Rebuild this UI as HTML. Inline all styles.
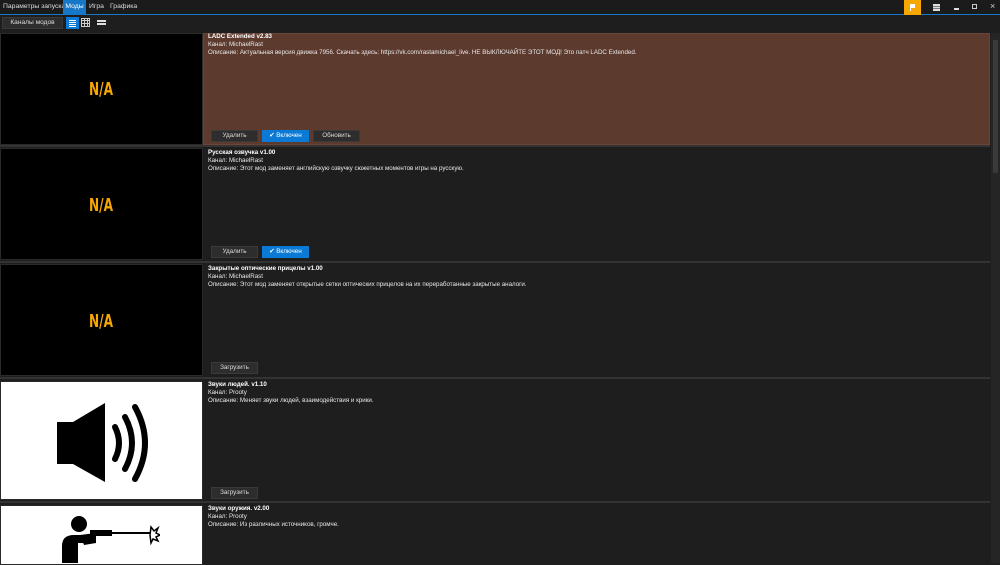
<!DOCTYPE html>
<html><head><meta charset="utf-8"><style>
*{margin:0;padding:0;box-sizing:border-box}
body{width:1000px;height:563px;overflow:hidden;background:#1e1e1e;font-family:"Liberation Sans",sans-serif;color:#ddd;position:relative;font-size:7px}
.a{position:absolute}
.tb{top:0;left:0;width:1000px;height:15px;background:#1b1b1b;border-bottom:1px solid #1677c7}
.tab{top:0;height:14px;line-height:14px;font-size:6.8px;color:#ddd}
.img{left:0;width:203px;background:#000;border:1px solid #2a2a2a}
.na{color:#f6a800;font-weight:bold;font-size:18px;font-family:"DejaVu Sans Condensed","Liberation Sans",sans-serif;transform:scaleX(0.75);transform-origin:left top;letter-spacing:0px}
.t{left:208px;top:0;font-size:6.2px;line-height:8px;color:#e8e8e8}
.t b{color:#fff}
.btn{height:12px;width:47px;background:#2d2d2d;border:1px solid #3a3a3a;color:#ddd;font-size:6.3px;text-align:center;line-height:10px}
.on{background:#0a7ad6;border-color:#0a7ad6;color:#fff}
.sep{left:0;width:990px;height:2px;background:#333}
</style></head><body>
<div class="a tb"></div>
<div class="a tab" style="left:3px">Параметры запуска</div>
<div class="a tab" style="left:63px;width:23px;background:#1677c7;text-align:center;color:#fff">Моды</div>
<div class="a tab" style="left:89px">Игра</div>
<div class="a tab" style="left:110px">Графика</div>
<div class="a" style="left:904px;top:0;width:17px;height:15px;background:#f6a800"><div class="a" style="left:6px;top:4px;width:5px;height:4px;background:#fff"></div><div class="a" style="left:6px;top:4px;width:1px;height:7px;background:#fff"></div></div>
<div class="a" style="left:933px;top:4px;width:7px;height:1.5px;background:#ddd;box-shadow:0 2.5px #ddd,0 5px #ddd"></div>
<div class="a" style="left:954px;top:8px;width:5px;height:1.5px;background:#ddd"></div>
<div class="a" style="left:972px;top:4px;width:5px;height:5px;border:1px solid #ccc"></div>
<div class="a" style="left:990px;top:1px;font-size:9px;color:#ccc">×</div>
<div class="a btn" style="left:2px;top:17px;width:61px;height:12px;font-size:6.6px">Каналы модов</div>
<div class="a" style="left:66px;top:17px;width:13px;height:12px;background:#0a7ad6"><div class="a" style="left:3px;top:3px;width:7px;height:1px;background:#fff;box-shadow:0 2px #fff,0 4px #fff,0 6px #fff"></div></div>
<div class="a" style="left:81px;top:18px;width:9px;height:9px;border:1px solid #ccc;background:repeating-linear-gradient(90deg,transparent 0 2px,#ccc 2px 3px),repeating-linear-gradient(0deg,transparent 0 2px,#ccc 2px 3px)"></div>
<div class="a" style="left:97px;top:20px;width:9px;height:1.5px;background:#ddd;box-shadow:0 3px #ddd"></div>
<div class="a" style="left:991px;top:33px;width:9px;height:530px;background:#252525"></div>
<div class="a" style="left:993px;top:40px;width:5px;height:133px;background:#3a3a3a"></div>
<!-- item1 -->
<div class="a" style="left:203px;top:33px;width:787px;height:112px;background:#5d3a2e;border:1px solid #6a4538"></div>
<div class="a img" style="top:33px;height:112px"></div>
<div class="a na" style="left:89px;top:79px">N/A</div>
<div class="a t" style="top:33px"><b>LADC Extended v2.83</b><br>Канал: MichaelRast<br>Описание: Актуальная версия движка 7956. Скачать здесь: https://vk.com/rastamichael_live. НЕ ВЫКЛЮЧАЙТЕ ЭТОТ МОД! Это патч LADC Extended.</div>
<div class="a btn" style="left:211px;top:130px">Удалить</div>
<div class="a btn on" style="left:262px;top:130px">✔ Включен</div>
<div class="a btn" style="left:313px;top:130px">Обновить</div>
<div class="a sep" style="top:145px"></div>
<!-- item2 -->
<div class="a img" style="top:148px;height:112px"></div>
<div class="a na" style="left:89px;top:195px">N/A</div>
<div class="a t" style="top:149px"><b>Русская озвучка v1.00</b><br>Канал: MichaelRast<br>Описание: Этот мод заменяет английскую озвучку сюжетных моментов игры на русскую.</div>
<div class="a btn" style="left:211px;top:246px">Удалить</div>
<div class="a btn on" style="left:262px;top:246px">✔ Включен</div>
<div class="a sep" style="top:261px"></div>
<!-- item3 -->
<div class="a img" style="top:264px;height:112px"></div>
<div class="a na" style="left:89px;top:311px">N/A</div>
<div class="a t" style="top:265px"><b>Закрытые оптические прицелы v1.00</b><br>Канал: MichaelRast<br>Описание: Этот мод заменяет открытые сетки оптических прицелов на их переработанные закрытые аналоги.</div>
<div class="a btn" style="left:211px;top:362px">Загрузить</div>
<div class="a sep" style="top:377px"></div>
<!-- item4 -->
<div class="a img" style="top:381px;height:119px;background:#fff"></div>
<svg class="a" style="left:55px;top:403px" width="95" height="80" viewBox="0 0 95 80"><path d="M2 18 H18 L50 -1 V78 L18 60 H2 Z" fill="#000" transform="translate(0,1)"/><g fill="none" stroke="#000" stroke-width="6" stroke-linecap="round"><path d="M60 24 Q68 40 60 56"/><path d="M70 14 Q84 40 70 66"/><path d="M80 4 Q100 40 80 76"/></g></svg>
<div class="a t" style="top:381px"><b>Звуки людей. v1.10</b><br>Канал: Prooty<br>Описание: Меняет звуки людей, взаимодействия и крики.</div>
<div class="a btn" style="left:211px;top:487px">Загрузить</div>
<div class="a sep" style="top:501px"></div>
<!-- item5 -->
<div class="a img" style="top:505px;height:60px;background:#fff"></div>
<svg class="a" style="left:60px;top:513px" width="100" height="50" viewBox="0 0 100 50"><circle cx="19" cy="11" r="8" fill="#000"/><path d="M2 50 V33 Q2 22 14 22 H28 V30 H18 V50 Z" fill="#000"/><path d="M20 22 L36 20 L36 30 L24 32 Z" fill="#000"/><rect x="30" y="17" width="22" height="6" fill="#000"/><rect x="50" y="19" width="40" height="2" fill="#000"/><path d="M91 14 L94 18 L98 15 L96 20 L100 22 L96 24 L98 28 L93 26 L91 30 L90 22Z" fill="none" stroke="#000" stroke-width="1.5"/></svg>
<div class="a t" style="top:505px"><b>Звуки оружия. v2.00</b><br>Канал: Prooty<br>Описание: Из различных источников, громче.</div>
</body></html>
